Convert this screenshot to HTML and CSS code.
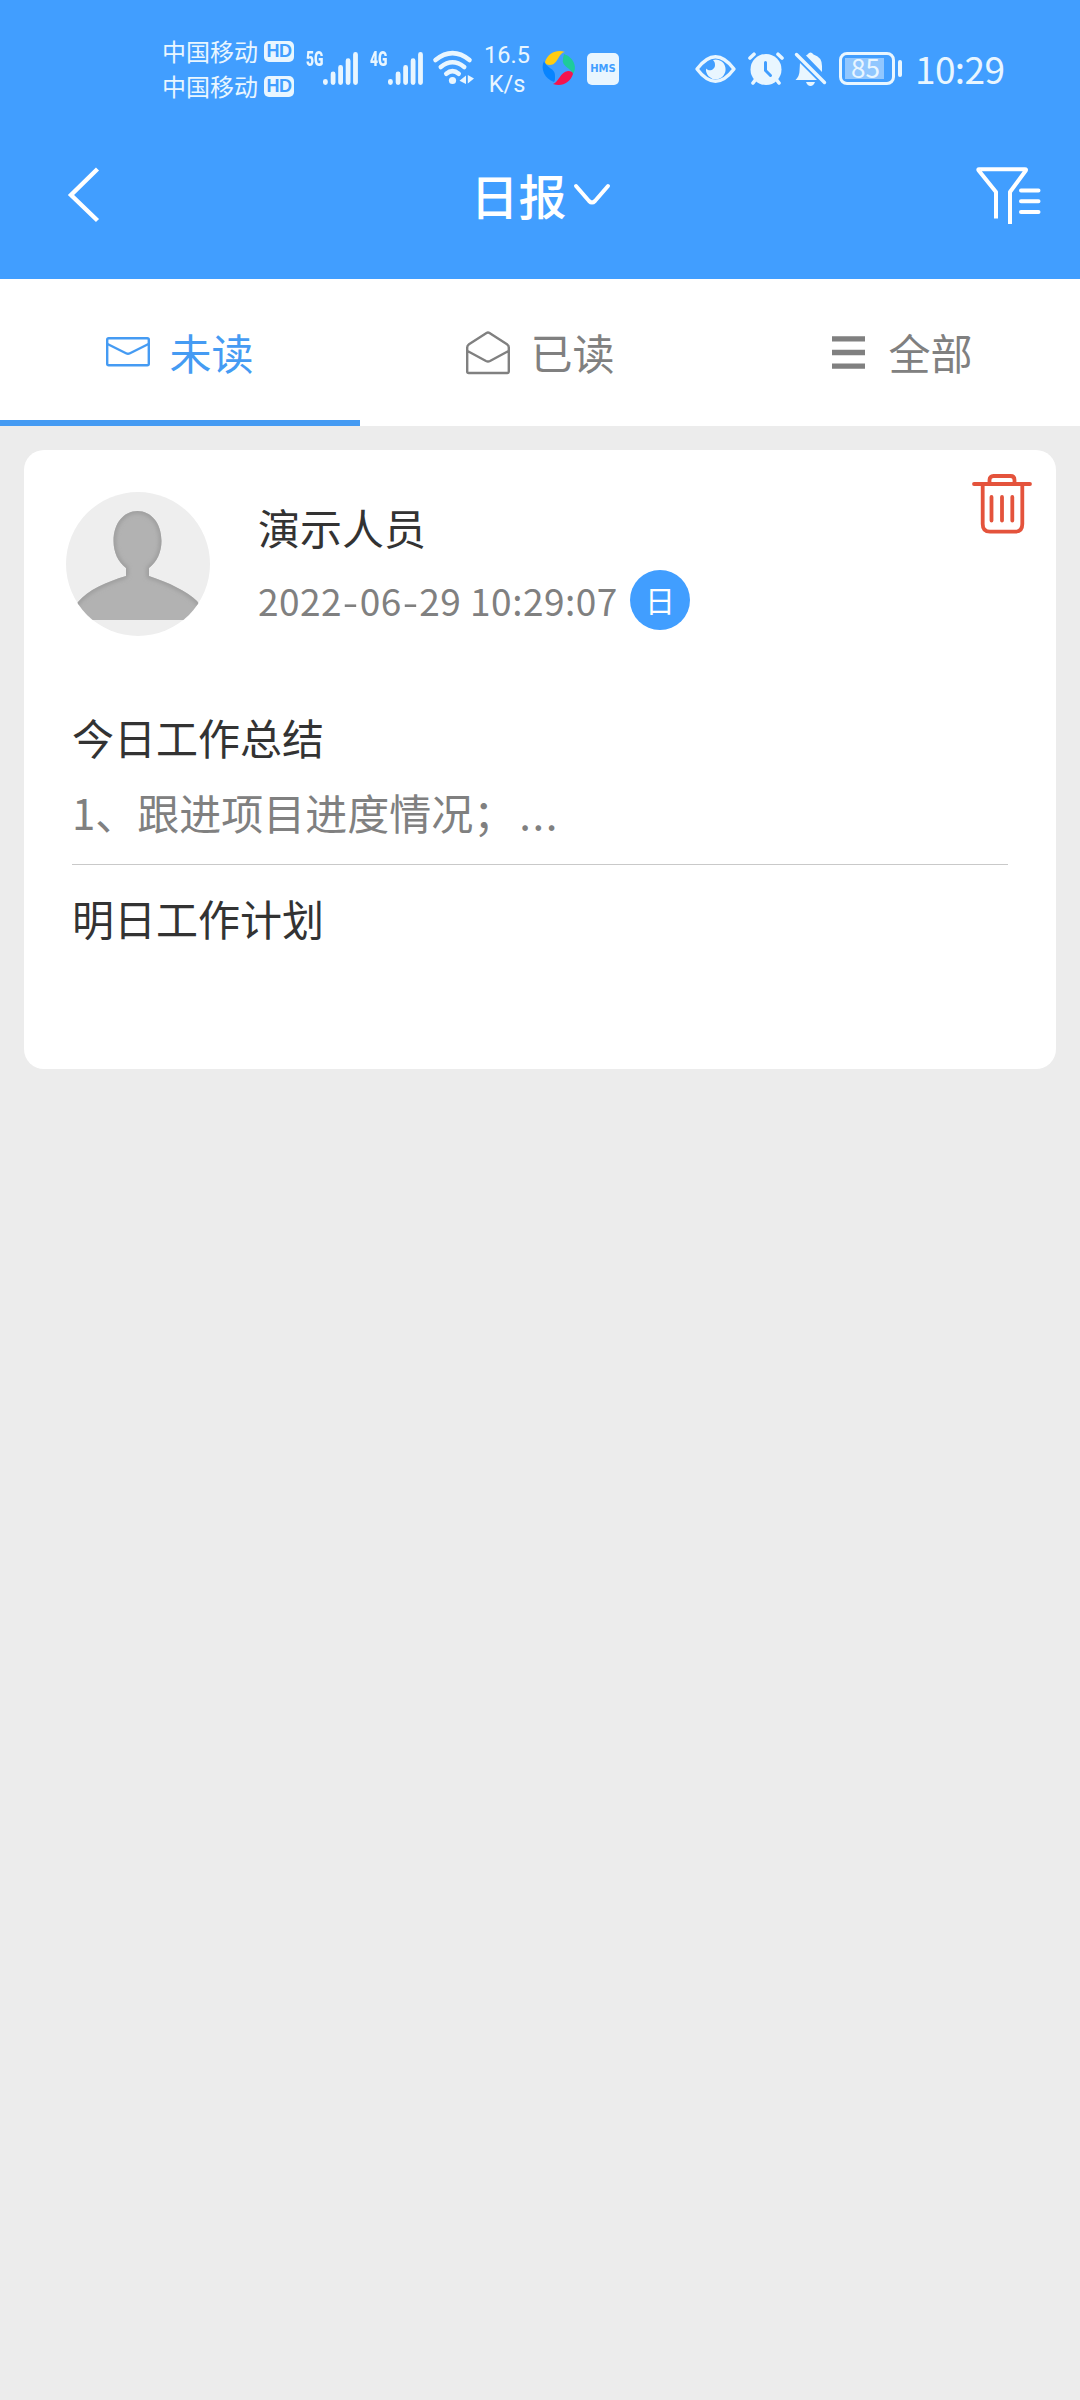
FILE: index.html
```html
<!DOCTYPE html>
<html lang="zh-CN">
<head>
<meta charset="utf-8">
<title>日报</title>
<link rel="stylesheet" href="styles.css">
</head>
<body>
<header class="header">
  <div class="status">
    <div class="carriers">
      <div class="carrier">中国移动<span class="hd">HD</span></div>
      <div class="carrier">中国移动<span class="hd">HD</span></div>
    </div>
    <span class="net net-5g">5G</span>
    <svg class="signal" width="35" height="33" viewBox="0 0 35 33" stroke="currentColor" stroke-width="4.8" stroke-linecap="round"><path d="M2.4 29.3v1.3M10.1 22v8.6M17.6 15.500v15.1M25.100 8.700v21.900M32.500 2.400v28.200"/></svg>
    <span class="net net-4g">4G</span>
    <svg class="signal" width="35" height="33" viewBox="0 0 35 33" stroke="currentColor" stroke-width="4.8" stroke-linecap="round"><path d="M2.4 29.3v1.3M10.1 22v8.6M17.6 15.500v15.1M25.100 8.700v21.900M32.500 2.400v28.200"/></svg>
    <svg class="wifi" width="41" height="34" viewBox="0 0 41 34" fill="none" stroke="currentColor" stroke-width="4.600" stroke-linecap="round"><path d="M2.500 9Q19.500-4.800 36.500 9M7.800 16Q19.500 6.500 31.200 16M13.300 22.800Q19.500 17.500 25.700 22.800"/><circle cx="19.500" cy="29.500" r="3.600" fill="currentColor" stroke="none"/><path d="M33 24.500v8.500L26.500 29.800zM34.800 24v8.500L41 27.500z" fill="currentColor" stroke="none"/></svg>
    <div class="speed"><span>16.5</span><span>K/s</span></div>
    <svg class="ball" width="34" height="34" viewBox="0 0 34 34"><path d="M3 11C6 1 16-2 23 1C16 2 16 14 8 14C5 14 3 13 3 11z" fill="#fc1"/><path d="M22 3C31 6 36 16 31 23C29 17 19 15 21 8C21 6 22 4 22 3z" fill="#1ecb9b"/><path d="M31 23C28 32 20 36 11 33C17 31 18 21 26 20C29 20 31 21 31 23z" fill="#f5134d"/><path d="M12 31C3 28-2 18 2 10C5 18 14 17 13 26C13 28 13 30 12 31z" fill="#0784ff"/></svg>
    <span class="hms">HMS</span>
    <svg class="eye" width="41" height="28" viewBox="0 0 41 28" fill="none"><path d="M2 14Q20.500-10.500 39 14Q20.500 38.500 2 14z" stroke="currentColor" stroke-width="3.400" stroke-linejoin="round"/><path d="M18 5A9.800 9.800 0 1 1 11 13.500C14 17 20 15 20 10C20 8 19.500 6.500 18 5z" fill="currentColor"/></svg>
    <svg class="alarm" width="36" height="33" viewBox="0 0 36 33" fill="none" stroke="currentColor" stroke-width="3.600" stroke-linecap="round"><circle cx="18" cy="17.500" r="15.5" fill="currentColor" stroke="none"/><path d="M2 6L6 2.200M34 6L30 2.200M5 31L8 27M31 31L28 27"/><path d="M17.500 10.500v8L22.500 23.500" stroke="#419eff" stroke-width="3"/></svg>
    <svg class="bell" width="32" height="34" viewBox="0 0 32 34"><path d="M11 3.500L12.500 2.500Q15.500-1.500 18.500 2.500Q27 5 27 14V20zM5 11L22 28H0.500Q4.500 24 4.500 19zM11 30h9Q18.500 34 15.500 34T11 30z" fill="currentColor"/><path d="M1.500 2.500L29.500 30.500" stroke="currentColor" stroke-width="3.400" stroke-linecap="round"/></svg>
    <div class="battery"><span class="level">85</span></div>
    <span class="cap"></span>
    <time class="clock">10:29</time>
  </div>
  <nav class="nav">
    <svg class="back" width="32" height="56" viewBox="0 0 32 56" fill="none" stroke="#fff" stroke-width="4.400"><path d="M29.500 1L3 27L29.500 52.500"/></svg>
    <h1 class="title">日报<svg class="chevron" width="36" height="21" viewBox="0 0 36 21" fill="none" stroke="#fff" stroke-width="4" stroke-linecap="round"><path d="M2 2L15 17Q18 20 21 17L34 2"/></svg></h1>
    <svg class="filter" width="65" height="58" viewBox="0 0 65 58" fill="none" stroke="#fff" stroke-width="4"><path d="M20 51.500V25L2.500 3.200Q2 2.200 3 2.200H49Q50.500 2.200 49.800 3.500L34 25V57" stroke-linejoin="round"/><path d="M45 23.500h17.500M45 34.300h17.500M45 45h17.500" stroke-linecap="round"/></svg>
  </nav>
</header>
<div class="tabs">
  <div class="tab active"><svg class="mail" width="44" height="30" viewBox="0 0 44 30" fill="none" stroke="currentColor" stroke-width="2.400"><rect x="1.200" y="1.200" width="41.600" height="27" rx="1.500"/><path d="M1.500 7L20 16.300Q22 17.300 24 16.300L42.500 7"/></svg>未读</div>
  <div class="tab"><svg class="open-mail" width="44" height="44" viewBox="0 0 44 44" fill="none" stroke="currentColor" stroke-width="2.400" stroke-linejoin="round"><path d="M1.200 16.500Q1.200 14.500 3 13.200L20.500 2Q22 1 23.500 2L41 13.200Q42.800 14.500 42.800 16.500V40.500Q42.800 42 41.300 42H2.700Q1.200 42 1.200 40.500zM1.500 20L20 30Q22 31 24 30L42.500 20"/></svg>已读</div>
  <div class="tab"><svg class="menu" width="33" height="33" viewBox="0 0 33 33" stroke="currentColor" stroke-width="5.400"><path d="M0 2.900h33M0 16.500h33M0 30.100h33"/></svg>全部</div>
</div>
<main class="card">
  <div class="person">
    <svg class="avatar" width="144" height="144" viewBox="0 0 144 144">
      <defs>
        <clipPath id="round"><circle cx="72" cy="72" r="72"/></clipPath>
        <filter id="soft"><feGaussianBlur stdDeviation="2"/></filter>
        <clipPath id="body"><path d="M60 84V76C52 70 47.500 60 47.500 49C47.500 31 58 19 71.500 19S95.500 31 95.500 49C95.500 60 91 70 83 76V84C104 91 120 99 131 109L144 128H0L12 110C22 98 40 90 60 84z"/></clipPath>
      </defs>
      <g clip-path="url(#round)">
        <rect width="144" height="144" fill="#eee"/>
        <g clip-path="url(#body)"><rect width="144" height="128" fill="#b2b2b2"/><path d="M60 84V76C52 70 47.500 60 47.500 49C47.500 31 58 19 71.500 19S95.500 31 95.500 49C95.500 60 91 70 83 76V84C104 91 120 99 131 109L144 128M0 128L12 110C22 98 40 90 60 84" fill="none" stroke="#999" stroke-width="4" filter="url(#soft)"/></g>
      </g>
    </svg>
    <div class="info">
      <div class="name">演示人员</div>
      <div class="meta"><time class="date">2022<i>-</i>06<i>-</i>29 10:29:07</time><span class="badge">日</span></div>
    </div>
    <svg class="trash" width="60" height="60" viewBox="0 0 60 60" fill="none" stroke="#e4533c" stroke-width="3.800" stroke-linecap="round"><path d="M2 10h56M17.500 9V6Q17.500 2 21.500 2H38.500Q42.500 2 42.500 6V9M10.700 10V50Q10.700 57.700 18 57.700H43Q50.300 57.700 50.300 50V10M19.500 23v23.500M30 23v23.500M40.300 23v23.500"/></svg>
  </div>
  <section class="entry">
    <h2>今日工作总结</h2>
    <p>1、跟进项目进度情况；<span class="more">...</span></p>
  </section>
  <section class="entry">
    <h2>明日工作计划</h2>
  </section>
</main>
</body>
</html>
```
FILE: styles.css
```css
* { box-sizing: border-box; }
body {
  margin: 0;
  min-height: 2400px;
  background: #ececec;
  color: #333;
  font-family: "Noto Sans CJK SC", sans-serif;
}
svg { display: block; flex: none; overflow: visible; }

.header { height: 279px; background: #419eff; color: #e9f6ff; }
.status { display: flex; align-items: center; height: 136px; padding-left: 162px; white-space: nowrap; }
.carriers { width: 132px; flex: none; }
.carrier { display: flex; align-items: center; justify-content: space-between; height: 35px; font-size: 24px; line-height: 35px; }
.hd {
  width: 30px; height: 21px; margin-top: 2px; border-radius: 5px;
  background: #e9f6ff; color: #419eff;
  font: bold 18px/21px "Liberation Sans", sans-serif;
  letter-spacing: -0.5px; text-align: center;
}
.net { font: 900 21px/20px "Roboto", sans-serif; transform: scaleX(0.66); transform-origin: left; margin-bottom: 19px; width: 17px; flex: none; }
.net-5g { margin-left: 12px; }
.net-4g { margin-left: 12px; width: 18px; }
.wifi { margin-left: 10px; }
.speed { display: flex; flex-direction: column; align-items: center; width: 46px; margin-left: 10px; font: 23.5px/29px "Roboto", sans-serif; margin-top: 3px; }
.ball { margin-left: 12px; }
.hms {
  width: 32px; height: 32px; margin-left: 11px; margin-top: 1px; border-radius: 5px;
  background: #e9f6ff; color: #419eff;
  font: bold 10px/32px "DejaVu Sans", sans-serif; text-align: center;
}
.eye { margin-left: 76px; margin-top: 1px; }
.alarm { margin-left: 12px; }
.bell { margin-left: 11px; margin-top: 2px; }
.battery { width: 56px; height: 33px; margin-left: 12px; padding: 3px; border: 3px solid; border-radius: 8px; }
.level {
  display: block; width: 39px; height: 21px; padding-left: 2px;
  background: #91c7ff; font-size: 26px; line-height: 18px; text-align: center;
}
.cap { width: 4px; height: 17px; margin-left: 3px; border-radius: 2px; background: currentColor; }
.clock { margin-left: 13px; font-size: 37px; line-height: 40px; letter-spacing: -0.6px; }

.nav { display: flex; align-items: center; justify-content: space-between; height: 120px; padding: 0 39px 0 68px; }
.title { display: flex; align-items: center; gap: 7px; margin: 0 0 4px 4px; color: #fff; font-size: 48px; line-height: 60px; font-weight: 500; }
.chevron { margin-top: 0; }

.tabs { display: grid; grid-template-columns: repeat(3, 360px); height: 147px; background: #fff; color: #808080; }
.tab { display: flex; align-items: center; justify-content: center; padding: 5px 0 0; font-size: 42px; line-height: 48px; border-bottom: 6px solid transparent; }
.tab:nth-child(3) { padding-left: 5px; }
.active { color: #459bf3; border-color: #459bf3; }
.mail { margin-right: 19px; }
.open-mail { margin-right: 20px; margin-left: 1px; margin-top: 1px; }
.menu { margin-right: 23px; }

.card { height: 619px; margin: 24px 24px 0; padding: 24px 24px 0 42px; background: #fff; border-radius: 20px; }
.person { display: flex; align-items: flex-start; height: 225px; }
.avatar { margin-top: 18px; }
.info { flex: 1; margin-left: 48px; padding-top: 23px; }
.name { height: 60px; font-size: 42px; line-height: 60px; }
.meta { display: flex; align-items: center; gap: 12px; height: 60px; margin-top: 13px; color: #808080; }
.date { font-size: 37px; line-height: 60px; letter-spacing: 0.5px; width: 360px; white-space: nowrap; }
.date i { display: inline-block; width: 17.5px; font-style: normal; transform: scaleX(1.2); text-align: center; }
.badge { width: 60px; height: 60px; border-radius: 50%; background: #419eff; color: #fff; font-size: 30px; line-height: 59px; text-align: center; }

.entry { width: 936px; margin-left: 6px; padding: 8px 0 22px; }
.entry h2 { margin: 0; font-size: 42px; line-height: 60px; font-weight: 400; }
.entry p { margin: 15px 0 0; font-size: 42px; line-height: 60px; color: #808080; }
.entry + .entry { border-top: 1px solid #c9c9c9; padding-top: 23px; }
.more { margin-left: 4px; letter-spacing: 1.5px; }
```
